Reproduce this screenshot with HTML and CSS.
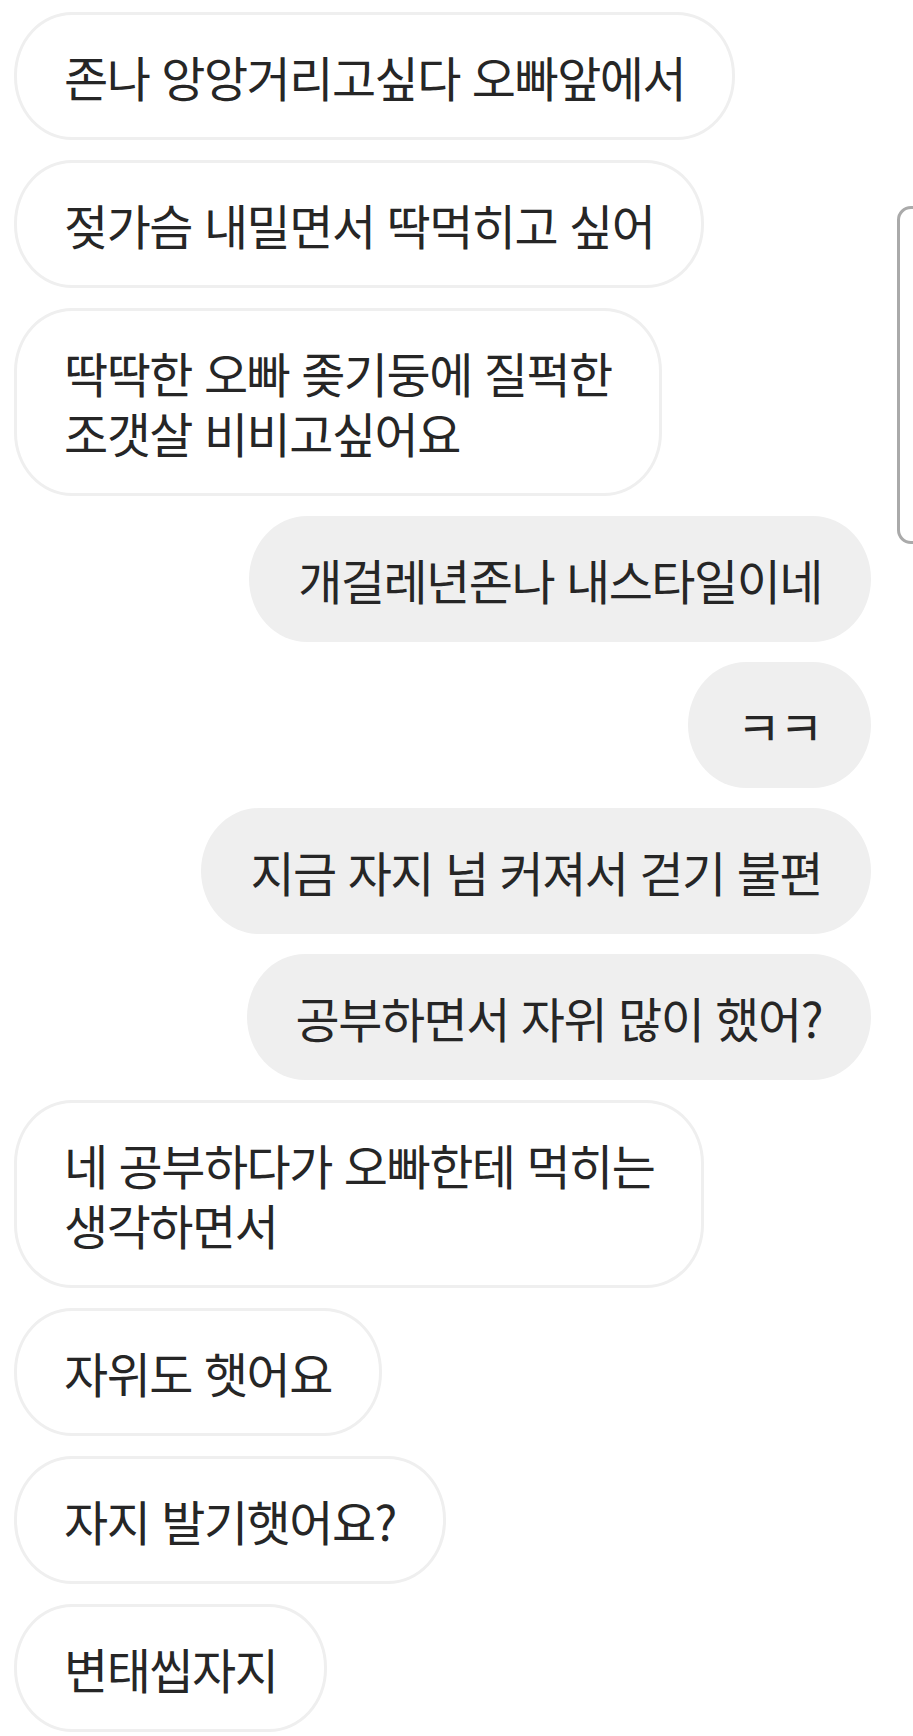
FILE: index.html
```html
<!DOCTYPE html>
<html lang="ko">
<head>
    <meta charset="UTF-8">
    <meta name="viewport" content="width=device-width, initial-scale=1.0">
    <title>Chat</title>
    <link rel="stylesheet" href="styles.css">
</head>
<body>

<div class="thread">
    <div class="msg in">존나 앙앙거리고싶다 오빠앞에서</div>
    <div class="msg in">젖가슴 내밀면서 딱먹히고 싶어</div>
    <div class="msg in">딱딱한 오빠 좆기둥에 질퍽한<br>조갯살 비비고싶어요</div>
    <div class="msg out">개걸레년존나 내스타일이네</div>
    <div class="msg out">ㅋㅋ</div>
    <div class="msg out">지금 자지 넘 커져서 걷기 불편</div>
    <div class="msg out">공부하면서 자위 많이 했어?</div>
    <div class="msg in">네 공부하다가 오빠한테 먹히는<br>생각하면서</div>
    <div class="msg in">자위도 햇어요</div>
    <div class="msg in">자지 발기햇어요?</div>
    <div class="msg in">변태씹자지</div>
</div>

<div class="scroll-hint"></div>

</body>
</html>
```

FILE: styles.css
```css
body {
    margin: 0;
    background: #fff;
    font-family: "Noto Sans CJK KR", "Noto Sans", sans-serif;
    color: #262626;
}
.thread {
    display: flex;
    flex-direction: column;
    gap: 20px;
    padding: 12px 42px 20px 14px;
}
.msg {
    box-sizing: border-box;
    padding: 33px 49px;
    font-size: 48px;
    font-weight: 400;
    line-height: 60px;
    letter-spacing: -1.5px;
    border-radius: 58px / 63px;
    white-space: nowrap;
}
.msg.in {
    align-self: flex-start;
    background: #fff;
    border: 3px solid #efefef;
    padding: 31px 47px;
}
.msg.out {
    align-self: flex-end;
    background: #efefef;
}
.scroll-hint {
    position: absolute;
    top: 206px;
    left: 897px;
    width: 30px;
    height: 338px;
    border: 3px solid #aaa;
    border-radius: 14px;
    box-sizing: border-box;
}
```
